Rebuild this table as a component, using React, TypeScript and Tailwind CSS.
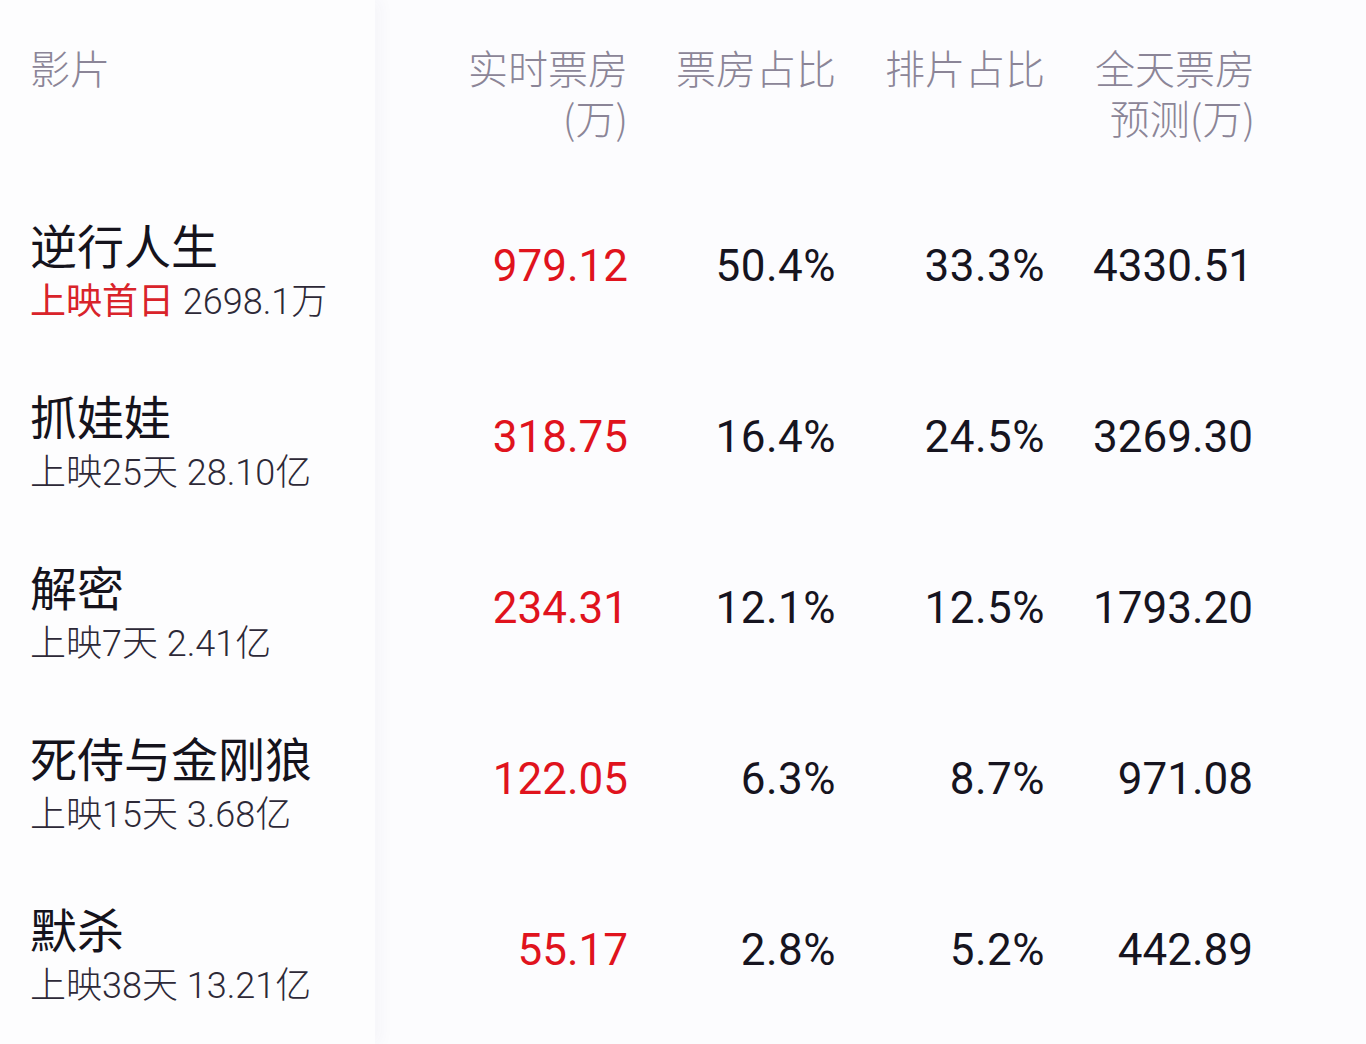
import React from "react";

const cjk = "font-['Noto_Sans_CJK_SC','Noto_Sans',sans-serif]";
const num = "font-['Roboto','Noto_Sans_CJK_SC',sans-serif]";

type Film = {
  name: string;
  tag: string;
  tagRed?: boolean;
  total: string;
  live: string;
  share: string;
  screen: string;
  forecast: string;
};

const films: Film[] = [
  { name: "逆行人生", tag: "上映首日", tagRed: true, total: "2698.1万", live: "979.12", share: "50.4%", screen: "33.3%", forecast: "4330.51" },
  { name: "抓娃娃", tag: "上映25天", total: "28.10亿", live: "318.75", share: "16.4%", screen: "24.5%", forecast: "3269.30" },
  { name: "解密", tag: "上映7天", total: "2.41亿", live: "234.31", share: "12.1%", screen: "12.5%", forecast: "1793.20" },
  { name: "死侍与金刚狼", tag: "上映15天", total: "3.68亿", live: "122.05", share: "6.3%", screen: "8.7%", forecast: "971.08" },
  { name: "默杀", tag: "上映38天", total: "13.21亿", live: "55.17", share: "2.8%", screen: "5.2%", forecast: "442.89" },
];

function HeaderCell({ lines }: { lines: string[] }) {
  return (
    <div className="flex flex-col items-end pt-[42px] text-[40px] leading-[50px] font-light text-[#8b8597]">
      {lines.map((l) => (
        <span key={l} className="whitespace-nowrap">{l}</span>
      ))}
    </div>
  );
}

const cell = `h-[171px] flex items-center justify-end text-[44px] ${num}`;

export default function App() {
  return (
    <div className={`w-[1366px] h-[1044px] overflow-hidden bg-[#fcfcfe] flex ${cjk}`}>
      {/* film names column */}
      <div className="w-[375px] shrink-0 bg-[#fdfdfe] shadow-[6px_0_14px_rgba(60,60,100,0.035)] pl-[30px]">
        <div className="h-[180px] pt-[42px] text-[40px] leading-[50px] font-light text-[#8b8597]">影片</div>
        {films.map((f) => (
          <div key={f.name} className="h-[171px] pt-[36px] flex flex-col">
            <span className="text-[47px] leading-[56px] text-[#15131c] whitespace-nowrap">{f.name}</span>
            <span className={`text-[36px] leading-[44px] mt-[8px] font-light text-[#2d2937] whitespace-nowrap ${num}`}>
              <span className={f.tagRed ? "text-[#d9232a] font-normal" : ""}>{f.tag}</span> {f.total}
            </span>
          </div>
        ))}
      </div>

      {/* numbers */}
      <div className="flex-1 grid grid-cols-[253px_208px_209px_210px_1fr] auto-rows-min">
        <div className="h-[180px]"><HeaderCell lines={["实时票房", "(万)"]} /></div>
        <div className="h-[180px]"><HeaderCell lines={["票房占比"]} /></div>
        <div className="h-[180px]"><HeaderCell lines={["排片占比"]} /></div>
        <div className="h-[180px]"><HeaderCell lines={["全天票房", "预测(万)"]} /></div>
        <div className="h-[180px]" />
        {films.map((f) => (
          <React.Fragment key={f.name}>
            <div className={`${cell} text-[#e0131d]`}>{f.live}</div>
            <div className={`${cell} text-[#16141f] tracking-[0.5px]`}>{f.share}</div>
            <div className={`${cell} text-[#16141f] tracking-[0.5px]`}>{f.screen}</div>
            <div className={`${cell} text-[#16141f] pr-[2px]`}>{f.forecast}</div>
            <div className="h-[171px]" />
          </React.Fragment>
        ))}
      </div>
    </div>
  );
}
